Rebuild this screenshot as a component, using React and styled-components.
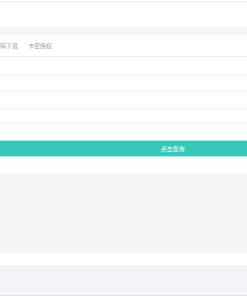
import React from 'react';
import styled, { createGlobalStyle } from 'styled-components';

const GlobalStyle = createGlobalStyle`
  body {
    margin: 0;
    overflow: hidden;
    background: #ffffff;
    font-family: "Noto Sans CJK SC", "Noto Sans", sans-serif;
  }
`;

const StyledPage = styled.div`
  width: 385px;
  margin-left: -20px;
`;

const StyledHeader = styled.header`
  height: 25px;
  margin-top: 1px;
  border-top: 1px solid #efeff1;
`;

const StyledBand = styled.div`
  height: ${(props) => props.$height}px;
  background: #f3f4f8;
  border-top: ${(props) => (props.$bordered ? '1px solid #e6e7ec' : 'none')};
  border-bottom: ${(props) => (props.$bordered ? '1px solid #e2e3e8' : 'none')};
`;

const StyledTabs = styled.nav`
  display: flex;
  align-items: center;
  gap: 10px;
  height: 21px;
  padding-left: 8px;
  border-bottom: 1px solid #efefef;
`;

const StyledTab = styled.span`
  font-size: 6px;
  line-height: 1;
  color: #a0a0a0;
`;

const StyledField = styled.div`
  height: ${(props) => props.$height}px;
  border-bottom: 1px solid ${(props) => props.$line || '#f1f1f1'};
`;

const StyledButton = styled.button`
  display: block;
  width: 100%;
  height: 17px;
  margin-top: 7px;
  padding: 0;
  border: none;
  border-top: 1px solid #b5ebe4;
  border-bottom: 1px solid #b5ebe4;
  background: #35c8b9;
  color: #ffffff;
  font-family: inherit;
  font-size: 6px;
  line-height: 1;
`;

const StyledSpacer = styled.div`
  height: 8px;
  border-bottom: 1px solid #f8f8f8;
`;

const StyledResult = styled.section`
  height: 80px;
  margin-top: 7px;
  background: #f5f5f5;
`;

const StyledGap = styled.div`
  height: 13px;
`;

function App() {
  return (
    <>
      <GlobalStyle />
      <StyledPage>
        <StyledHeader />
        <StyledBand $height={8} />
        <StyledTabs>
          <StyledTab>二维码下载</StyledTab>
          <StyledTab>卡密授权</StyledTab>
        </StyledTabs>
        <StyledField $height={18} />
        <StyledField $height={15} />
        <StyledField $height={16} />
        <StyledField $height={14} />
        <StyledField $height={8} $line="#f7f7f7" />
        <StyledButton>点击查询</StyledButton>
        <StyledSpacer />
        <StyledResult />
        <StyledGap />
        <StyledBand $height={28} $bordered />
      </StyledPage>
    </>
  );
}

export default App;
